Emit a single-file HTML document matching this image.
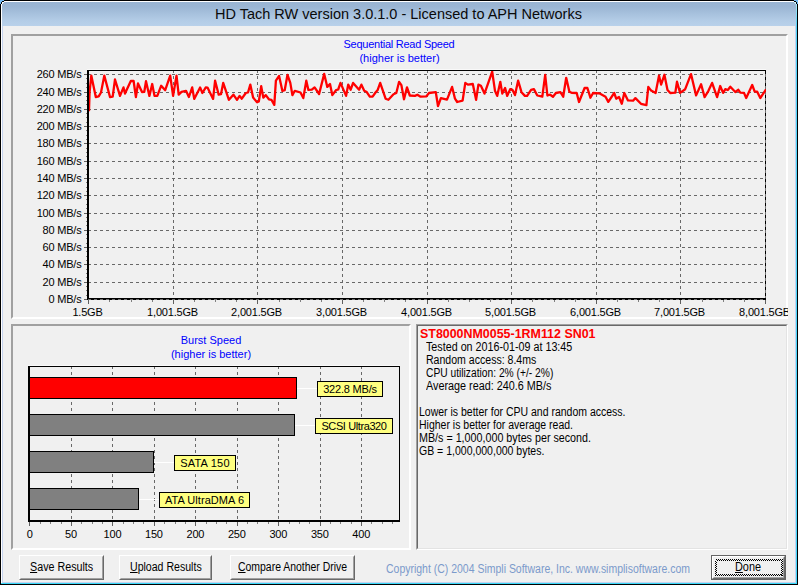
<!DOCTYPE html>
<html><head><meta charset="utf-8"><title>HD Tach</title>
<style>
html,body{margin:0;padding:0;}
body{width:798px;height:585px;overflow:hidden;position:relative;background:#f0f0f0;font-family:"Liberation Sans",sans-serif;font-size:11px;color:#000;}
.abs{position:absolute;}
.t{position:absolute;white-space:nowrap;line-height:13px;height:13px;}
.panel{position:absolute;box-sizing:border-box;border:2px solid;border-color:#a0a0a0 #fff #fff #a0a0a0;}
.btn{position:absolute;box-sizing:border-box;height:25px;border:1px solid;border-color:#fff #696969 #696969 #fff;background:#f0f0f0;}
.btn i{position:absolute;left:0;top:0;right:0;bottom:0;border:1px solid;border-color:#f0f0f0 #a0a0a0 #a0a0a0 #f0f0f0;}
.btn span{position:absolute;top:5px;white-space:nowrap;line-height:13px;font-size:11px;}
u{text-decoration:underline;}
.yl{position:absolute;right:716.5px;letter-spacing:-0.2px;white-space:nowrap;line-height:13px;height:13px;font-size:11px;}
.xl{position:absolute;letter-spacing:-0.2px;white-space:nowrap;line-height:13px;height:13px;font-size:11px;transform:translateX(-50%);}
.lab{position:absolute;box-sizing:border-box;height:16px;border:1px solid #000;background:#ffff80;font-size:11px;line-height:14px;text-align:center;white-space:nowrap;}
.blue{color:#0000ff;text-align:center;}
.ms{font-size:12px !important;}
</style></head><body>
<!-- window frame -->
<div class="abs" style="left:0;top:0;width:798px;height:585px;background:#000;"></div>
<div class="abs" style="left:1px;top:1px;width:796px;height:583px;background:#fff;"></div>
<div class="abs" style="left:1px;top:583px;width:796px;height:1px;background:#38d8f8;"></div>
<div class="abs" style="left:796px;top:2px;width:1px;height:582px;background:linear-gradient(#b4ecfa 0px,#50d4f8 24px,#40d6fa 100%);"></div>
<div class="abs" style="left:2px;top:2px;width:794px;height:581px;background:#c4d2ee;"></div>
<div class="abs" style="left:2px;top:2px;width:794px;height:24px;background:linear-gradient(#99b4d2 0px,#9bb6d4 5px,#b4cde7 19px,#b9d1ea 24px);"></div>
<div class="abs" style="left:3px;top:26px;width:792px;height:556px;background:#f0f0f0;"></div>
<svg class="abs" style="left:0;top:0" width="798" height="5" shape-rendering="crispEdges">
<rect x="0" y="0" width="4" height="1" fill="#74bcf6"/><rect x="0" y="1" width="2" height="1" fill="#74bcf6"/><rect x="2" y="1" width="2" height="1" fill="#000"/>
<rect x="0" y="2" width="1" height="2" fill="#74bcf6"/><rect x="1" y="2" width="1" height="2" fill="#000"/><rect x="2" y="2" width="2" height="1" fill="#fff"/><rect x="2" y="3" width="1" height="1" fill="#fff"/>
<rect x="794" y="0" width="4" height="1" fill="#74bcf6"/><rect x="796" y="1" width="2" height="1" fill="#74bcf6"/><rect x="794" y="1" width="2" height="1" fill="#000"/>
<rect x="797" y="2" width="1" height="2" fill="#74bcf6"/><rect x="796" y="2" width="1" height="2" fill="#000"/><rect x="794" y="2" width="2" height="1" fill="#d0f6fc"/><rect x="795" y="3" width="1" height="1" fill="#d0f6fc"/>
</svg>
<div class="t" id="title" style="left:215px;top:5px;font-size:14.5px;line-height:18px;height:18px;color:#0a0a0a;">HD Tach RW version 3.0.1.0 - Licensed to APH Networks</div>
<!-- panels -->
<div class="panel" style="left:11px;top:34px;width:777px;height:285px;"></div>
<div class="panel" style="left:11px;top:324px;width:400px;height:226px;"></div>
<div class="panel" style="left:416px;top:324px;width:372px;height:226px;border-width:1px;"><div style="position:absolute;left:0;top:0;right:0;bottom:0;border:1px solid;border-color:#696969 #e3e3e3 #e3e3e3 #696969;"></div></div>

<svg class="abs" style="left:0;top:0" width="798" height="585" shape-rendering="crispEdges">
<rect x="87" y="69" width="679" height="1" fill="#f9f9f9"/>
<line x1="88" y1="74.5" x2="765" y2="74.5" stroke="#686868" stroke-dasharray="3 3"/>
<rect x="84" y="74" width="3" height="1" fill="#606060"/>
<line x1="88" y1="92.5" x2="765" y2="92.5" stroke="#686868" stroke-dasharray="3 3"/>
<rect x="84" y="92" width="3" height="1" fill="#606060"/>
<line x1="88" y1="109.5" x2="765" y2="109.5" stroke="#686868" stroke-dasharray="3 3"/>
<rect x="84" y="109" width="3" height="1" fill="#606060"/>
<line x1="88" y1="126.5" x2="765" y2="126.5" stroke="#686868" stroke-dasharray="3 3"/>
<rect x="84" y="126" width="3" height="1" fill="#606060"/>
<line x1="88" y1="143.5" x2="765" y2="143.5" stroke="#686868" stroke-dasharray="3 3"/>
<rect x="84" y="143" width="3" height="1" fill="#606060"/>
<line x1="88" y1="161.5" x2="765" y2="161.5" stroke="#686868" stroke-dasharray="3 3"/>
<rect x="84" y="161" width="3" height="1" fill="#606060"/>
<line x1="88" y1="178.5" x2="765" y2="178.5" stroke="#686868" stroke-dasharray="3 3"/>
<rect x="84" y="178" width="3" height="1" fill="#606060"/>
<line x1="88" y1="195.5" x2="765" y2="195.5" stroke="#686868" stroke-dasharray="3 3"/>
<rect x="84" y="195" width="3" height="1" fill="#606060"/>
<line x1="88" y1="213.5" x2="765" y2="213.5" stroke="#686868" stroke-dasharray="3 3"/>
<rect x="84" y="213" width="3" height="1" fill="#606060"/>
<line x1="88" y1="230.5" x2="765" y2="230.5" stroke="#686868" stroke-dasharray="3 3"/>
<rect x="84" y="230" width="3" height="1" fill="#606060"/>
<line x1="88" y1="247.5" x2="765" y2="247.5" stroke="#686868" stroke-dasharray="3 3"/>
<rect x="84" y="247" width="3" height="1" fill="#606060"/>
<line x1="88" y1="264.5" x2="765" y2="264.5" stroke="#686868" stroke-dasharray="3 3"/>
<rect x="84" y="264" width="3" height="1" fill="#606060"/>
<line x1="88" y1="282.5" x2="765" y2="282.5" stroke="#686868" stroke-dasharray="3 3"/>
<rect x="84" y="282" width="3" height="1" fill="#606060"/>
<line x1="88" y1="299.5" x2="765" y2="299.5" stroke="#686868" stroke-dasharray="3 3"/>
<rect x="84" y="299" width="3" height="1" fill="#606060"/>
<rect x="86" y="78" width="1" height="1" fill="#808080"/>
<rect x="86" y="83" width="1" height="1" fill="#808080"/>
<rect x="86" y="87" width="1" height="1" fill="#808080"/>
<rect x="86" y="96" width="1" height="1" fill="#808080"/>
<rect x="86" y="100" width="1" height="1" fill="#808080"/>
<rect x="86" y="104" width="1" height="1" fill="#808080"/>
<rect x="86" y="113" width="1" height="1" fill="#808080"/>
<rect x="86" y="117" width="1" height="1" fill="#808080"/>
<rect x="86" y="122" width="1" height="1" fill="#808080"/>
<rect x="86" y="130" width="1" height="1" fill="#808080"/>
<rect x="86" y="135" width="1" height="1" fill="#808080"/>
<rect x="86" y="139" width="1" height="1" fill="#808080"/>
<rect x="86" y="148" width="1" height="1" fill="#808080"/>
<rect x="86" y="152" width="1" height="1" fill="#808080"/>
<rect x="86" y="156" width="1" height="1" fill="#808080"/>
<rect x="86" y="165" width="1" height="1" fill="#808080"/>
<rect x="86" y="169" width="1" height="1" fill="#808080"/>
<rect x="86" y="174" width="1" height="1" fill="#808080"/>
<rect x="86" y="182" width="1" height="1" fill="#808080"/>
<rect x="86" y="187" width="1" height="1" fill="#808080"/>
<rect x="86" y="191" width="1" height="1" fill="#808080"/>
<rect x="86" y="199" width="1" height="1" fill="#808080"/>
<rect x="86" y="204" width="1" height="1" fill="#808080"/>
<rect x="86" y="208" width="1" height="1" fill="#808080"/>
<rect x="86" y="217" width="1" height="1" fill="#808080"/>
<rect x="86" y="221" width="1" height="1" fill="#808080"/>
<rect x="86" y="225" width="1" height="1" fill="#808080"/>
<rect x="86" y="234" width="1" height="1" fill="#808080"/>
<rect x="86" y="238" width="1" height="1" fill="#808080"/>
<rect x="86" y="243" width="1" height="1" fill="#808080"/>
<rect x="86" y="251" width="1" height="1" fill="#808080"/>
<rect x="86" y="256" width="1" height="1" fill="#808080"/>
<rect x="86" y="260" width="1" height="1" fill="#808080"/>
<rect x="86" y="269" width="1" height="1" fill="#808080"/>
<rect x="86" y="273" width="1" height="1" fill="#808080"/>
<rect x="86" y="277" width="1" height="1" fill="#808080"/>
<rect x="86" y="286" width="1" height="1" fill="#808080"/>
<rect x="86" y="290" width="1" height="1" fill="#808080"/>
<rect x="86" y="295" width="1" height="1" fill="#808080"/>
<rect x="88" y="300" width="1" height="4" fill="#606060"/>
<line x1="173.5" y1="70" x2="173.5" y2="298" stroke="#686868" stroke-dasharray="3 3"/>
<rect x="173" y="300" width="1" height="4" fill="#606060"/>
<line x1="257.5" y1="70" x2="257.5" y2="298" stroke="#686868" stroke-dasharray="3 3"/>
<rect x="257" y="300" width="1" height="4" fill="#606060"/>
<line x1="342.5" y1="70" x2="342.5" y2="298" stroke="#686868" stroke-dasharray="3 3"/>
<rect x="342" y="300" width="1" height="4" fill="#606060"/>
<line x1="427.5" y1="70" x2="427.5" y2="298" stroke="#686868" stroke-dasharray="3 3"/>
<rect x="427" y="300" width="1" height="4" fill="#606060"/>
<line x1="511.5" y1="70" x2="511.5" y2="298" stroke="#686868" stroke-dasharray="3 3"/>
<rect x="511" y="300" width="1" height="4" fill="#606060"/>
<line x1="596.5" y1="70" x2="596.5" y2="298" stroke="#686868" stroke-dasharray="3 3"/>
<rect x="596" y="300" width="1" height="4" fill="#606060"/>
<line x1="680.5" y1="70" x2="680.5" y2="298" stroke="#686868" stroke-dasharray="3 3"/>
<rect x="680" y="300" width="1" height="4" fill="#606060"/>
<rect x="765" y="70" width="1" height="230" fill="#707070"/>
<line x1="765.5" y1="71" x2="765.5" y2="300" stroke="#000" stroke-dasharray="3 3"/>
<rect x="765" y="300" width="1" height="4" fill="#606060"/>
<rect x="109" y="300" width="1" height="2" fill="#808080"/>
<rect x="131" y="300" width="1" height="2" fill="#808080"/>
<rect x="152" y="300" width="1" height="2" fill="#808080"/>
<rect x="194" y="300" width="1" height="2" fill="#808080"/>
<rect x="215" y="300" width="1" height="2" fill="#808080"/>
<rect x="236" y="300" width="1" height="2" fill="#808080"/>
<rect x="279" y="300" width="1" height="2" fill="#808080"/>
<rect x="300" y="300" width="1" height="2" fill="#808080"/>
<rect x="321" y="300" width="1" height="2" fill="#808080"/>
<rect x="363" y="300" width="1" height="2" fill="#808080"/>
<rect x="384" y="300" width="1" height="2" fill="#808080"/>
<rect x="405" y="300" width="1" height="2" fill="#808080"/>
<rect x="448" y="300" width="1" height="2" fill="#808080"/>
<rect x="469" y="300" width="1" height="2" fill="#808080"/>
<rect x="490" y="300" width="1" height="2" fill="#808080"/>
<rect x="532" y="300" width="1" height="2" fill="#808080"/>
<rect x="554" y="300" width="1" height="2" fill="#808080"/>
<rect x="575" y="300" width="1" height="2" fill="#808080"/>
<rect x="617" y="300" width="1" height="2" fill="#808080"/>
<rect x="638" y="300" width="1" height="2" fill="#808080"/>
<rect x="659" y="300" width="1" height="2" fill="#808080"/>
<rect x="702" y="300" width="1" height="2" fill="#808080"/>
<rect x="723" y="300" width="1" height="2" fill="#808080"/>
<rect x="744" y="300" width="1" height="2" fill="#808080"/>
<rect x="87" y="70" width="679" height="1" fill="#000"/>
<rect x="87" y="70" width="2" height="230" fill="#000"/>
<rect x="87" y="298" width="679" height="2" fill="#000"/>
<line x1="88" y1="299.5" x2="765" y2="299.5" stroke="#707070" stroke-dasharray="3 3"/>
<clipPath id="cp"><rect x="89" y="71" width="677" height="227"/></clipPath>
<polyline clip-path="url(#cp)" points="89.0,110.0 89.6,92.0 91.3,75.6 95.8,97.0 98.7,96.4 101.0,92.5 104.3,75.6 110.0,97.0 112.7,96.7 115.0,79.5 120.0,95.9 123.5,87.4 125.0,93.6 130.8,81.0 133.6,81.0 135.9,97.0 138.0,83.5 142.0,92.0 144.3,91.8 146.0,81.2 149.4,95.9 152.2,84.0 154.5,95.9 157.3,95.9 161.2,85.7 165.2,90.2 170.2,75.6 173.1,95.9 176.5,75.6 178.7,94.7 181.5,91.9 186.0,90.8 188.9,97.0 192.2,87.4 194.2,98.9 200.1,87.4 202.4,93.0 205.8,87.4 207.5,87.6 213.1,98.9 215.1,80.7 218.7,94.7 221.0,94.2 223.2,82.9 228.9,99.8 233.4,94.7 237.0,99.8 239.6,95.9 241.8,98.7 245.8,93.0 248.0,92.5 250.3,84.6 253.1,97.6 257.1,102.3 258.8,101.5 261.2,86.1 263.3,97.6 265.8,95.1 268.9,99.3 271.4,99.8 274.3,104.9 275.9,80.7 279.1,75.9 282.4,91.0 284.7,90.2 287.5,74.8 290.3,82.9 292.4,95.1 294.8,90.8 300.5,92.5 303.3,98.1 306.3,80.7 308.4,89.9 311.8,89.7 314.6,87.4 319.1,94.0 324.2,73.9 327.3,86.9 330.0,84.0 332.3,95.1 336.0,90.2 338.2,89.5 340.5,82.9 346.1,95.9 348.2,84.6 350.7,89.7 353.1,82.9 359.1,89.7 361.4,84.6 364.2,90.8 366.4,91.7 369.8,96.7 372.6,96.7 375.5,92.5 377.7,89.9 380.2,82.9 385.6,98.7 388.4,99.8 393.5,94.2 396.3,93.0 399.1,81.8 401.4,85.2 404.0,99.3 407.0,87.4 409.8,95.5 414.9,95.9 417.4,94.7 420.6,96.7 426.2,96.4 429.0,93.0 435.8,92.2 438.0,106.0 440.9,98.1 447.0,99.6 452.1,86.9 455.0,98.7 457.2,102.0 462.6,100.7 465.3,82.9 467.9,84.6 472.8,84.0 476.1,99.8 478.4,84.6 480.9,85.7 484.5,93.6 492.2,71.6 495.0,90.8 497.2,95.9 500.3,81.8 502.3,93.6 505.1,88.0 507.2,95.9 510.2,89.1 512.5,89.9 515.0,95.1 518.1,80.7 521.5,92.2 524.9,95.9 527.1,95.9 531.1,89.9 533.9,89.1 537.3,95.5 542.3,96.7 545.2,75.0 547.4,95.5 550.2,94.7 553.0,96.7 555.9,93.0 560.4,92.2 563.2,96.7 566.2,77.8 569.4,91.7 571.6,92.8 576.7,93.0 579.0,102.0 584.6,88.0 587.4,88.0 590.4,97.7 593.1,93.0 599.3,93.3 605.5,96.7 608.3,101.9 614.2,93.0 616.2,98.7 619.0,97.0 621.8,103.8 624.3,93.0 628.0,100.4 633.1,100.7 635.4,98.1 641.0,103.8 646.4,105.2 648.3,86.9 651.1,90.6 655.6,93.0 659.0,75.6 661.1,84.6 664.4,74.8 667.5,89.9 670.3,93.0 675.3,92.7 677.0,81.7 680.1,92.9 685.2,89.2 691.0,74.1 696.1,95.4 701.1,84.2 704.6,97.1 708.3,91.1 712.1,82.9 717.1,97.1 720.2,86.0 723.1,92.9 725.3,89.2 727.8,90.0 730.3,86.7 735.3,92.0 738.4,89.8 740.3,92.6 744.0,92.9 746.2,98.0 752.2,85.0 754.7,91.7 757.2,91.7 760.3,98.0 765.4,90.4" fill="none" stroke="#ff0000" stroke-width="2.3" stroke-linejoin="round" stroke-linecap="square" shape-rendering="geometricPrecision"/>
<rect x="28" y="365" width="372" height="1" fill="#f9f9f9"/>
<line x1="71.5" y1="366" x2="71.5" y2="520" stroke="#686868" stroke-dasharray="3 3"/>
<line x1="112.5" y1="366" x2="112.5" y2="520" stroke="#686868" stroke-dasharray="3 3"/>
<line x1="154.5" y1="366" x2="154.5" y2="520" stroke="#686868" stroke-dasharray="3 3"/>
<line x1="195.5" y1="366" x2="195.5" y2="520" stroke="#686868" stroke-dasharray="3 3"/>
<line x1="237.5" y1="366" x2="237.5" y2="520" stroke="#686868" stroke-dasharray="3 3"/>
<line x1="278.5" y1="366" x2="278.5" y2="520" stroke="#686868" stroke-dasharray="3 3"/>
<line x1="320.5" y1="366" x2="320.5" y2="520" stroke="#686868" stroke-dasharray="3 3"/>
<line x1="361.5" y1="366" x2="361.5" y2="520" stroke="#686868" stroke-dasharray="3 3"/>
<rect x="29" y="522" width="1" height="4" fill="#606060"/>
<rect x="71" y="522" width="1" height="4" fill="#606060"/>
<rect x="112" y="522" width="1" height="4" fill="#606060"/>
<rect x="154" y="522" width="1" height="4" fill="#606060"/>
<rect x="195" y="522" width="1" height="4" fill="#606060"/>
<rect x="237" y="522" width="1" height="4" fill="#606060"/>
<rect x="278" y="522" width="1" height="4" fill="#606060"/>
<rect x="320" y="522" width="1" height="4" fill="#606060"/>
<rect x="361" y="522" width="1" height="4" fill="#606060"/>
<rect x="40" y="522" width="1" height="2" fill="#808080"/>
<rect x="50" y="522" width="1" height="2" fill="#808080"/>
<rect x="61" y="522" width="1" height="2" fill="#808080"/>
<rect x="81" y="522" width="1" height="2" fill="#808080"/>
<rect x="92" y="522" width="1" height="2" fill="#808080"/>
<rect x="102" y="522" width="1" height="2" fill="#808080"/>
<rect x="123" y="522" width="1" height="2" fill="#808080"/>
<rect x="133" y="522" width="1" height="2" fill="#808080"/>
<rect x="143" y="522" width="1" height="2" fill="#808080"/>
<rect x="164" y="522" width="1" height="2" fill="#808080"/>
<rect x="175" y="522" width="1" height="2" fill="#808080"/>
<rect x="185" y="522" width="1" height="2" fill="#808080"/>
<rect x="206" y="522" width="1" height="2" fill="#808080"/>
<rect x="216" y="522" width="1" height="2" fill="#808080"/>
<rect x="226" y="522" width="1" height="2" fill="#808080"/>
<rect x="247" y="522" width="1" height="2" fill="#808080"/>
<rect x="257" y="522" width="1" height="2" fill="#808080"/>
<rect x="268" y="522" width="1" height="2" fill="#808080"/>
<rect x="289" y="522" width="1" height="2" fill="#808080"/>
<rect x="299" y="522" width="1" height="2" fill="#808080"/>
<rect x="309" y="522" width="1" height="2" fill="#808080"/>
<rect x="330" y="522" width="1" height="2" fill="#808080"/>
<rect x="340" y="522" width="1" height="2" fill="#808080"/>
<rect x="351" y="522" width="1" height="2" fill="#808080"/>
<rect x="371" y="522" width="1" height="2" fill="#808080"/>
<rect x="382" y="522" width="1" height="2" fill="#808080"/>
<rect x="392" y="522" width="1" height="2" fill="#808080"/>
<rect x="28" y="366" width="372" height="1" fill="#000"/>
<rect x="399" y="366" width="1" height="156" fill="#000"/>
<rect x="297" y="388" width="20" height="1" fill="#fff"/>
<rect x="29.5" y="377.5" width="267" height="21" fill="#ff0000" stroke="#000"/>
<rect x="295" y="425" width="20" height="1" fill="#fff"/>
<rect x="29.5" y="414.5" width="265" height="21" fill="#808080" stroke="#000"/>
<rect x="154" y="462" width="20" height="1" fill="#fff"/>
<rect x="29.5" y="451.5" width="124" height="21" fill="#808080" stroke="#000"/>
<rect x="139" y="499" width="20" height="1" fill="#fff"/>
<rect x="29.5" y="488.5" width="109" height="21" fill="#808080" stroke="#000"/>
<rect x="28" y="366" width="2" height="156" fill="#000"/>
<rect x="28" y="520" width="372" height="2" fill="#000"/>
</svg>
<div class="t blue" id="st1" style="left:299px;width:200px;top:38px;letter-spacing:-0.25px;">Sequential Read Speed</div>
<div class="t blue" id="st2" style="left:299.5px;width:200px;top:52px;">(higher is better)</div>
<div class="yl" style="top:68px;">260 MB/s</div>
<div class="yl" style="top:86px;">240 MB/s</div>
<div class="yl" style="top:103px;">220 MB/s</div>
<div class="yl" style="top:120px;">200 MB/s</div>
<div class="yl" style="top:137px;">180 MB/s</div>
<div class="yl" style="top:155px;">160 MB/s</div>
<div class="yl" style="top:172px;">140 MB/s</div>
<div class="yl" style="top:189px;">120 MB/s</div>
<div class="yl" style="top:207px;">100 MB/s</div>
<div class="yl" style="top:224px;">80 MB/s</div>
<div class="yl" style="top:241px;">60 MB/s</div>
<div class="yl" style="top:258px;">40 MB/s</div>
<div class="yl" style="top:276px;">20 MB/s</div>
<div class="yl" style="top:293px;">0 MB/s</div>
<div class="abs" style="left:0;top:300px;width:788px;height:20px;overflow:hidden;">
<div class="xl" style="left:87.5px;top:6px;">1.5GB</div>
<div class="xl" style="left:172.5px;top:6px;">1,001.5GB</div>
<div class="xl" style="left:256.5px;top:6px;">2,001.5GB</div>
<div class="xl" style="left:341.5px;top:6px;">3,001.5GB</div>
<div class="xl" style="left:426.5px;top:6px;">4,001.5GB</div>
<div class="xl" style="left:510.5px;top:6px;">5,001.5GB</div>
<div class="xl" style="left:595.5px;top:6px;">6,001.5GB</div>
<div class="xl" style="left:679.5px;top:6px;">7,001.5GB</div>
<div class="xl" style="left:764.5px;top:6px;">8,001.5GB</div>
</div>
<div class="t blue" id="bt1" style="left:111px;width:200px;top:334px;">Burst Speed</div>
<div class="t blue" id="bt2" style="left:111px;width:200px;top:348px;">(higher is better)</div>
<div class="xl" style="left:29.6px;top:528px;">0</div>
<div class="xl" style="left:71.0px;top:528px;">50</div>
<div class="xl" style="left:112.5px;top:528px;">100</div>
<div class="xl" style="left:153.9px;top:528px;">150</div>
<div class="xl" style="left:195.4px;top:528px;">200</div>
<div class="xl" style="left:236.8px;top:528px;">250</div>
<div class="xl" style="left:278.3px;top:528px;">300</div>
<div class="xl" style="left:319.8px;top:528px;">350</div>
<div class="xl" style="left:361.2px;top:528px;">400</div>
<div class="lab" style="left:317px;top:381px;width:66px;letter-spacing:-0.2px;">322.8 MB/s</div>
<div class="lab" style="left:315px;top:418px;width:78px;letter-spacing:-0.4px;">SCSI Ultra320</div>
<div class="lab" style="left:174px;top:455px;width:62px;letter-spacing:0.2px;">SATA 150</div>
<div class="lab" style="left:159px;top:492px;width:91px;letter-spacing:0.05px;">ATA UltraDMA 6</div>
<div class="t ms" id="i0" style="left:420px;top:328px;color:#ff0000;font-weight:bold;transform:scaleX(1.0358);transform-origin:0 0;">ST8000NM0055-1RM112 SN01</div>
<div class="t ms" id="i1" style="left:426px;top:341px;transform:scaleX(0.8950);transform-origin:0 0;">Tested on 2016-01-09 at 13:45</div>
<div class="t ms" id="i2" style="left:426px;top:354px;transform:scaleX(0.8797);transform-origin:0 0;">Random access: 8.4ms</div>
<div class="t ms" id="i3" style="left:426px;top:367px;transform:scaleX(0.8540);transform-origin:0 0;">CPU utilization: 2% (+/- 2%)</div>
<div class="t ms" id="i4" style="left:426px;top:380px;transform:scaleX(0.9001);transform-origin:0 0;">Average read: 240.6 MB/s</div>
<div class="t ms" id="j0" style="left:419px;top:406px;transform:scaleX(0.8746);transform-origin:0 0;">Lower is better for CPU and random access.</div>
<div class="t ms" id="j1" style="left:419px;top:419px;transform:scaleX(0.8745);transform-origin:0 0;">Higher is better for average read.</div>
<div class="t ms" id="j2" style="left:419px;top:432px;transform:scaleX(0.8937);transform-origin:0 0;">MB/s = 1,000,000 bytes per second.</div>
<div class="t ms" id="j3" style="left:419px;top:445px;transform:scaleX(0.8763);transform-origin:0 0;">GB = 1,000,000,000 bytes.</div>
<div class="btn" style="left:19px;top:555px;width:85px;"><i></i><span class="ms" id="b1" style="left:10px;transform:scaleX(0.8937);transform-origin:0 0;"><u>S</u>ave Results</span></div>
<div class="btn" style="left:119px;top:555px;width:93px;"><i></i><span class="ms" id="b2" style="left:9.5px;transform:scaleX(0.8809);transform-origin:0 0;"><u>U</u>pload Results</span></div>
<div class="btn" style="left:230px;top:555px;width:125px;"><i></i><span class="ms" id="b3" style="left:6.5px;transform:scaleX(0.8700);transform-origin:0 0;"><u>C</u>ompare Another Drive</span></div>
<div class="t ms" id="copy" style="left:386px;top:563px;color:#7b9acb;transform:scaleX(0.8732);transform-origin:0 0;">Copyright (C) 2004 Simpli Software, Inc. www.simplisoftware.com</div>
<div class="abs" style="left:711px;top:555px;width:75px;height:25px;background:#646464;"></div>
<div class="btn" style="left:712px;top:556px;width:73px;height:23px;"><i></i><span class="ms" id="b4" style="left:22px;top:4px;transform:scaleX(0.9058);transform-origin:0 0;"><u>D</u>one</span><svg class="abs" style="left:0;top:0" width="71" height="21" shape-rendering="crispEdges"><rect x="2.5" y="2.5" width="67" height="16" fill="none" stroke="#000" stroke-dasharray="1 1"/><rect x="3.5" y="3.5" width="65" height="14" fill="none" stroke="#000" stroke-dasharray="1 1"/></svg></div>
</body></html>
